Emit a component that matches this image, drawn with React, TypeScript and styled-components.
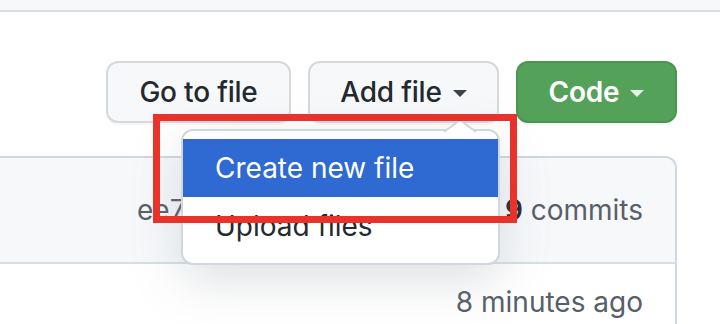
import React from "react";
import styled, { createGlobalStyle } from "styled-components";

const GlobalStyle = createGlobalStyle`
  html, body { margin: 0; padding: 0; background: #ffffff; }
  body { font-family: Inter, "Liberation Sans", Arial, sans-serif; overflow: hidden; }
  * { box-sizing: border-box; }
`;

const Page = styled.div`
  position: relative;
  width: 720px;
  height: 324px;
  overflow: hidden;
  background: #fff;
`;

const TopStrip = styled.div`
  height: 12px;
  background: #f6f8fa;
  border-bottom: 2px solid #d8dee4;
`;

const Toolbar = styled.div`
  display: flex;
  justify-content: flex-end;
  gap: 17px;
  margin: 49px 43px 0 0;
  height: 62px;
`;

const ButtonWrap = styled.div`
  position: relative;
  display: flex;
`;

const Button = styled.div<{ $primary?: boolean; $w: number }>`
  display: flex;
  align-items: center;
  justify-content: center;
  gap: 11px;
  width: ${(p) => p.$w}px;
  height: 62px;
  border-radius: 12px;
  font-size: 28px;
  font-weight: ${(p) => (p.$primary ? 600 : 500)};
  letter-spacing: -0.2px;
  white-space: nowrap;
  color: ${(p) => (p.$primary ? "#ffffff" : "#24292f")};
  background: ${(p) => (p.$primary ? "#54a259" : "#f6f8fa")};
  border: 2px solid ${(p) => (p.$primary ? "#4b9651" : "#d6d9dc")};
  box-shadow: 0 2px 0 rgba(27, 31, 36, 0.04);
`;

const Caret = styled.span<{ $light?: boolean }>`
  display: inline-block;
  width: 0;
  height: 0;
  margin-top: 3px;
  border-left: 7px solid transparent;
  border-right: 7px solid transparent;
  border-top: 7px solid ${(p) => (p.$light ? "rgba(255,255,255,0.85)" : "#3d4248")};
`;

const Menu = styled.div`
  position: absolute;
  top: calc(100% + 6px);
  right: -1px;
  width: 319px;
  padding: 8px 0;
  background: #ffffff;
  border: 2px solid #d0d7de;
  border-radius: 12px;
  box-shadow: 0 16px 48px rgba(140, 149, 159, 0.28);
  z-index: 5;
`;

const MenuCaret = styled.svg`
  position: absolute;
  top: -11px;
  right: 22px;
  width: 32px;
  height: 12px;
  overflow: visible;
`;

const MenuItem = styled.div<{ $active?: boolean }>`
  height: 58px;
  display: flex;
  align-items: center;
  padding-left: 32px;
  font-size: 28px;
  font-weight: 400;
  white-space: nowrap;
  color: ${(p) => (p.$active ? "#ffffff" : "#24292f")};
  background: ${(p) => (p.$active ? "#2f69d2" : "transparent")};
`;

const FileBox = styled.div`
  margin: 33px 43px 0 -20px;
  border: 2px solid #d0d7de;
  border-bottom: none;
  border-radius: 0 12px 0 0;
  overflow: hidden;
`;

const BoxHeader = styled.div`
  height: 106px;
  display: flex;
  align-items: center;
  justify-content: space-between;
  padding: 0 32px 0 155px;
  background: #f6f8fa;
  border-bottom: 2px solid #d8dee4;
  font-size: 28px;
  white-space: nowrap;
  color: #57606a;
`;

const Strong = styled.strong`
  color: #24292f;
  font-weight: 600;
`;

const Row = styled.div`
  height: 80px;
  display: flex;
  justify-content: flex-end;
  padding: 21px 32px 0 0;
  font-size: 28px;
  white-space: nowrap;
  color: #57606a;
  background: #ffffff;
`;

const Annotation = styled.div`
  position: absolute;
  left: 153px;
  top: 114px;
  width: 364px;
  height: 109px;
  border: 7px solid #e8322a;
  z-index: 10;
  pointer-events: none;
`;

export default function App() {
  return (
    <Page>
      <GlobalStyle />
      <TopStrip />
      <Toolbar>
        <ButtonWrap>
          <Button $w={185}>Go to file</Button>
        </ButtonWrap>
        <ButtonWrap>
          <Button $w={191}>
            Add file <Caret />
          </Button>
          <Menu>
            <MenuCaret viewBox="0 0 32 12">
              <path d="M0 12 L16 0 L32 12 Z" fill="#ffffff" />
              <path d="M0 12 L16 0 L32 12" fill="none" stroke="#d0d7de" strokeWidth="2" />
            </MenuCaret>
            <MenuItem $active>Create new file</MenuItem>
            <MenuItem>Upload files</MenuItem>
          </Menu>
        </ButtonWrap>
        <ButtonWrap>
          <Button $primary $w={161}>
            Code <Caret $light />
          </Button>
        </ButtonWrap>
      </Toolbar>
      <FileBox>
        <BoxHeader>
          <span>ee7</span>
          <span>
            <Strong>9</Strong> commits
          </span>
        </BoxHeader>
        <Row>8 minutes ago</Row>
      </FileBox>
      <Annotation />
    </Page>
  );
}
